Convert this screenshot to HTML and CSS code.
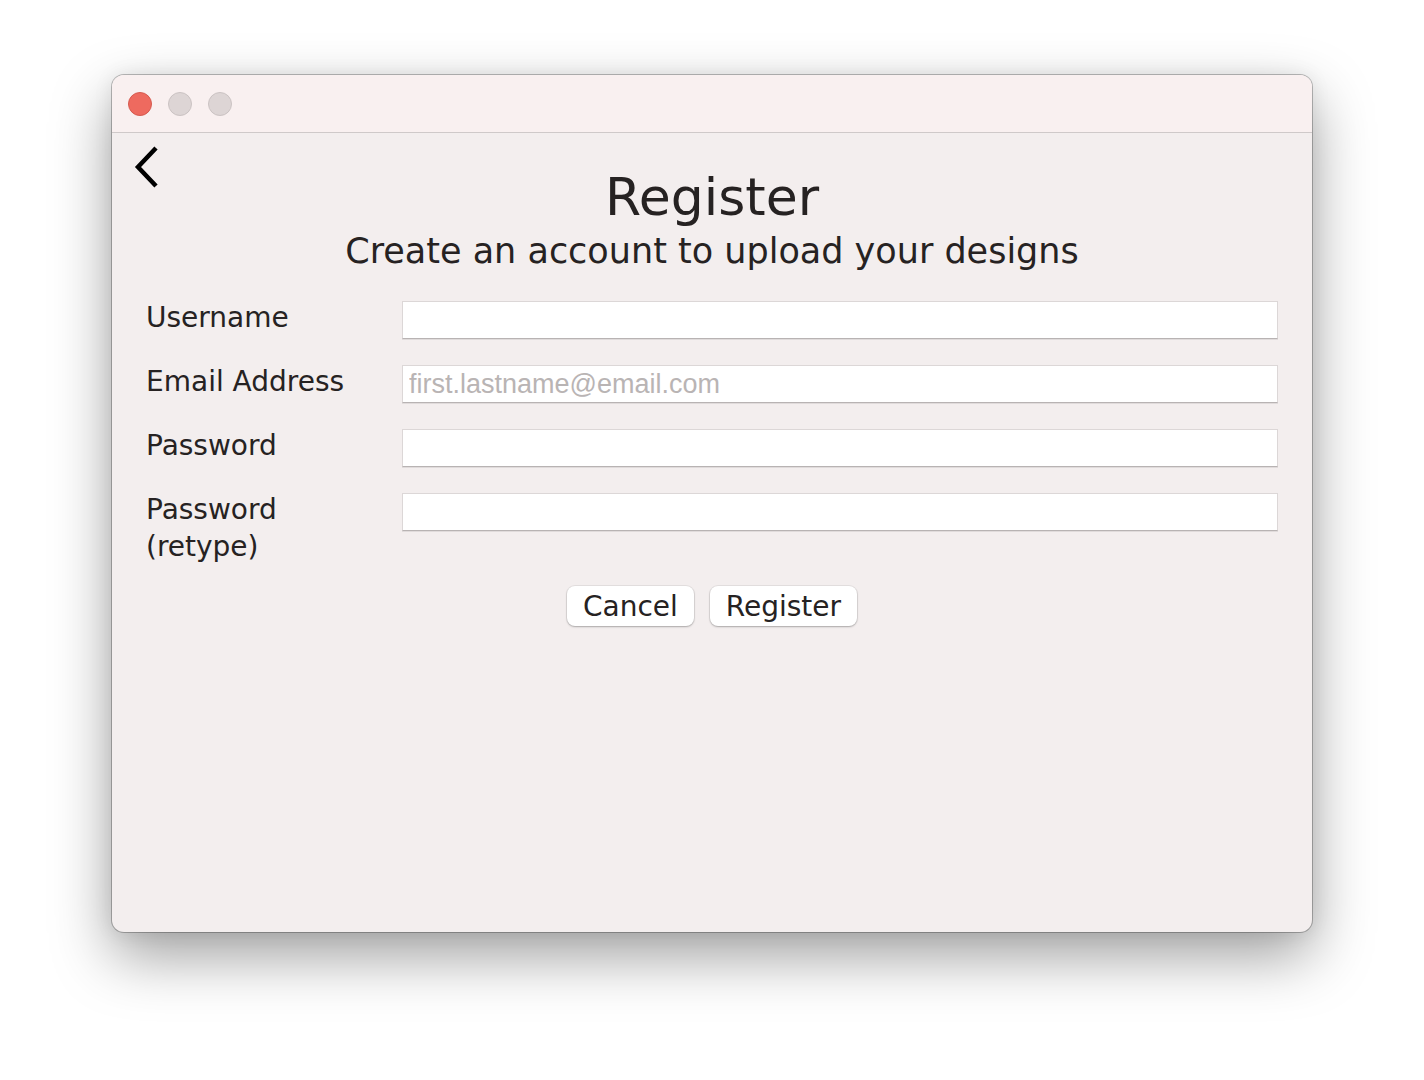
FILE: index.html
```html
<!DOCTYPE html>
<html>
<head>
<meta charset="utf-8">
<link rel="stylesheet" href="styles.css">
</head>
<body>
<div class="window">
  <div class="titlebar">
    <span class="light red"></span>
    <span class="light gray"></span>
    <span class="light gray"></span>
  </div>
  <div class="content">
    <button class="back" aria-label="Back">
      <svg width="28" height="44" viewBox="0 0 28 44"><path d="M24 3 L6 22 L24 41" fill="none" stroke="#000" stroke-width="4.5"/></svg>
    </button>
    <h1 class="title">Register</h1>
    <p class="subtitle">Create an account to upload your designs</p>
    <form class="form">
      <label class="label">Username</label>
      <input class="field" type="text">
      <label class="label">Email Address</label>
      <input class="field" type="text" placeholder="first.lastname@email.com">
      <label class="label">Password</label>
      <input class="field" type="password">
      <label class="label">Password<br>(retype)</label>
      <input class="field" type="password">
    </form>
    <div class="actions">
      <button class="btn">Cancel</button>
      <button class="btn">Register</button>
    </div>
  </div>
</div>
</body>
</html>
```
FILE: styles.css
```css
html, body {
  margin: 0;
  padding: 0;
  background: #ffffff;
  height: 100%;
}
body {
  font-family: "DejaVu Sans", sans-serif;
  padding: 75px 112px 0 112px;
  box-sizing: border-box;
}
.window {
  width: 1200px;
  height: 857px;
  border-radius: 12px;
  background: #f3eeee;
  box-shadow: 0 0 0 1px rgba(0,0,0,0.25), 0 24px 60px rgba(0,0,0,0.38), 0 0 20px rgba(0,0,0,0.08);
  overflow: hidden;
  display: flex;
  flex-direction: column;
}
.titlebar {
  height: 57px;
  flex: none;
  background: #f9f0f0;
  border-bottom: 1px solid #cfc9c9;
  display: flex;
  align-items: center;
  gap: 16px;
  padding: 0 0 0 16px;
}
.light {
  width: 24px;
  height: 24px;
  border-radius: 50%;
  box-sizing: border-box;
}
.light.red {
  background: #ee6a5f;
  border: 1px solid #d65a4f;
}
.light.gray {
  background: #ddd5d5;
  border: 1px solid #cbc3c3;
}
.content {
  position: relative;
  flex: 1;
  padding: 0 34px;
}
.back {
  position: absolute;
  left: 20px;
  top: 12px;
  border: 0;
  background: none;
  padding: 0;
  margin: 0;
  line-height: 0;
}
.title {
  margin: 34px 0 0 0;
  text-align: center;
  font-weight: normal;
  font-size: 52px;
  line-height: 60px;
  color: #262222;
}
.subtitle {
  margin: 0;
  text-align: center;
  font-size: 35px;
  line-height: 48px;
  color: #262222;
}
.form {
  margin-top: 26px;
  display: grid;
  grid-template-columns: 256px 1fr;
  row-gap: 26px;
  align-items: start;
}
.label {
  font-size: 28px;
  line-height: 37px;
  color: #262222;
  margin-top: -2px;
}
.field {
  height: 38px;
  box-sizing: border-box;
  border: 1px solid #dcd7d7;
  border-bottom: 1px solid #b8b3b3;
  box-shadow: 0 1px 0 rgba(0,0,0,0.08);
  background: #fff;
  margin: 0;
  padding: 0 6px;
  font-family: "Liberation Sans", sans-serif;
  font-size: 27px;
  color: #262222;
  outline: none;
}
.field::placeholder {
  color: #b9b4b4;
}
.actions {
  margin-top: 21px;
  display: flex;
  justify-content: center;
  gap: 16px;
}
.btn {
  font-family: "DejaVu Sans", sans-serif;
  font-size: 28px;
  color: #262222;
  background: #fff;
  border: 0;
  border-radius: 8px;
  height: 40px;
  padding: 0 16px;
  box-shadow: 0 0 0 1px rgba(0,0,0,0.06), 0 1px 2px rgba(0,0,0,0.25);
}
```
